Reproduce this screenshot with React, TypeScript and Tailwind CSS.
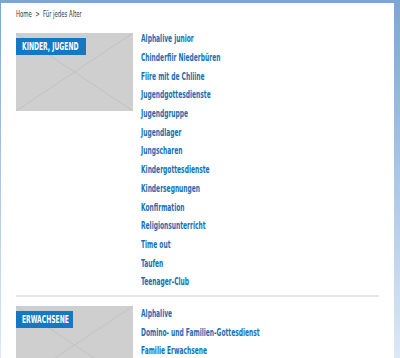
import React from 'react';

const kinder = [
    'Alphalive junior',
    'Chinderfiir Niederbüren',
    'Fiire mit de Chliine',
    'Jugendgottesdienste',
    'Jugendgruppe',
    'Jugendlager',
    'Jungscharen',
    'Kindergottesdienste',
    'Kindersegnungen',
    'Konfirmation',
    'Religionsunterricht',
    'Time out',
    'Taufen',
    'Teenager-Club',
];

const erwachsene = ['Alphalive', 'Domino- und Familien-Gottesdienst', 'Familie Erwachsene'];

const narrow = "[font-family:'DejaVu_Sans_Condensed','DejaVu_Sans',sans-serif]";

const Placeholder = ({ label, labelWidth }: { label: string; labelWidth: string }) => (
    <div className="relative w-[117px] h-[78px] shrink-0 bg-[#cfcfcf] overflow-hidden">
        <svg className="absolute inset-0" width="117" height="78" viewBox="0 0 117 78">
            <line x1="0" y1="0" x2="117" y2="78" stroke="#c2c2c2" strokeWidth="1" />
            <line x1="117" y1="0" x2="0" y2="78" stroke="#c2c2c2" strokeWidth="1" />
        </svg>
        <div className={`absolute left-0 top-[5px] h-[17px] pl-[6px] flex items-center bg-[#1479c2] ${labelWidth}`}>
            <span className={`block shrink-0 origin-left scale-x-[0.67] whitespace-nowrap text-white font-bold uppercase text-[10px] leading-[17px] ${narrow}`}>
                {label}
            </span>
        </div>
    </div>
);

const LinkList = ({ items, top }: { items: string[]; top: string }) => (
    <div className={`flex flex-col ${top}`}>
        {items.map((item) => (
            <a key={item} href="#" className="flex items-center h-[18.7px] whitespace-nowrap">
                <span className={`block origin-left scale-x-[0.66] text-[10px] leading-[12px] font-bold text-[#1a6fb4] ${narrow}`}>
                    {item}
                </span>
            </a>
        ))}
    </div>
);

const App = () => {
    return (
        <div className="w-[400px] h-[358px] overflow-hidden bg-gradient-to-b from-[#7aa6d6] to-[#dce8f5] pt-[3px] pr-[6px] pl-[1px]">
            <div className="bg-white h-full overflow-hidden px-[15px]">
                <div className="h-[24px] flex items-center whitespace-nowrap">
                    <span className={`block origin-left scale-x-[0.66] text-[9px] text-[#333] ${narrow}`}>
                        Home&nbsp;&nbsp;&gt;&nbsp;&nbsp;Für jedes Alter
                    </span>
                </div>

                <div className="flex gap-[8px]">
                    <div className="mt-[6px]">
                        <Placeholder label="Kinder, Jugend" labelWidth="w-[70px]" />
                    </div>
                    <LinkList items={kinder} top="pt-[3px]" />
                </div>

                <div className="mt-[3px] h-[2px] bg-[#e6e6e6]" />

                <div className="flex gap-[8px] mt-[6px]">
                    <div className="mt-[3px]">
                        <Placeholder label="Erwachsene" labelWidth="w-[57px]" />
                    </div>
                    <LinkList items={erwachsene} top="pt-[2px]" />
                </div>
            </div>
        </div>
    );
};

export default App;
